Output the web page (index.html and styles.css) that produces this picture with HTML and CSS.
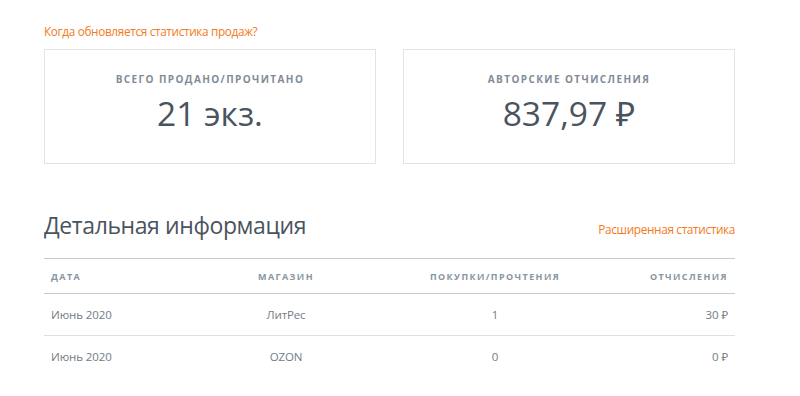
FILE: index.html
```html
<!DOCTYPE html>
<html lang="ru">
<head>
<meta charset="utf-8">
<link rel="stylesheet" href="styles.css">
</head>
<body>
<main class="page">
  <a class="link help" href="#">Когда обновляется статистика продаж?</a>
  <section class="cards">
    <div class="card">
      <div class="card-label">Всего продано/прочитано</div>
      <div class="card-value">21 экз.</div>
    </div>
    <div class="card">
      <div class="card-label">Авторские отчисления</div>
      <div class="card-value">837,97 ₽</div>
    </div>
  </section>
  <div class="details-head">
    <h2 class="title">Детальная информация</h2>
    <a class="link" href="#">Расширенная статистика</a>
  </div>
  <table class="table">
    <colgroup>
      <col class="c1"><col class="c2"><col class="c3"><col class="c4">
    </colgroup>
    <thead>
      <tr><th class="left">Дата</th><th>Магазин</th><th>Покупки/прочтения</th><th class="right">Отчисления</th></tr>
    </thead>
    <tbody>
      <tr><td class="left">Июнь 2020</td><td>ЛитРес</td><td>1</td><td class="right">30 ₽</td></tr>
      <tr><td class="left">Июнь 2020</td><td>OZON</td><td>0</td><td class="right">0 ₽</td></tr>
    </tbody>
  </table>
</main>
</body>
</html>
```

FILE: styles.css
```css
html, body {
  margin: 0;
  padding: 0;
  background: #ffffff;
}
body {
  font-family: "Open Sans", "Noto Sans", sans-serif;
  color: #4a545e;
}
.page {
  width: 691px;
  padding: 23px 0 0 44px;
}
.link {
  color: #f47a20;
  text-decoration: none;
  font-size: 11.8px;
  letter-spacing: -0.35px;
}
.help {
  display: block;
  line-height: 16px;
}
.cards {
  display: flex;
  gap: 27px;
  margin-top: 10px;
}
.card {
  flex: 1;
  height: 115px;
  border: 1px solid #e3e3e3;
  display: flex;
  flex-direction: column;
  align-items: center;
  padding-top: 22px;
  box-sizing: border-box;
}
.card-label {
  font-size: 10px;
  font-weight: 700;
  letter-spacing: 1.4px;
  text-transform: uppercase;
  color: #7f8c98;
  line-height: 14px;
}
.card-value {
  font-size: 33.5px;
  line-height: 44px;
  color: #4a545e;
  margin-top: 5px;
}
.details-head {
  display: flex;
  justify-content: space-between;
  align-items: baseline;
  margin-top: 44px;
}
.title {
  margin: 0;
  font-weight: 400;
  font-size: 23px;
  letter-spacing: -0.4px;
  line-height: 34px;
  color: #4a545e;
}
.table {
  width: 100%;
  border-collapse: collapse;
  margin-top: 16px;
  font-size: 11.5px;
  letter-spacing: -0.1px;
  color: #737c85;
}
.c1 { width: 156px; }
.c2 { width: 172px; }
.c3 { width: 246px; }
.table th {
  font-size: 9px;
  font-weight: 700;
  letter-spacing: 1.4px;
  text-transform: uppercase;
  color: #8796a3;
  height: 34px;
  border-top: 1px solid #c5cbcf;
  border-bottom: 1px solid #c5cbcf;
  text-align: center;
  padding: 0 7px;
}
.table td {
  height: 41px;
  text-align: center;
  padding: 0 7px;
  border-bottom: 1px solid #e0e0e0;
}
.table tbody tr:last-child td {
  border-bottom: none;
}
.table .left { text-align: left; }
.table .right { text-align: right; }
```
